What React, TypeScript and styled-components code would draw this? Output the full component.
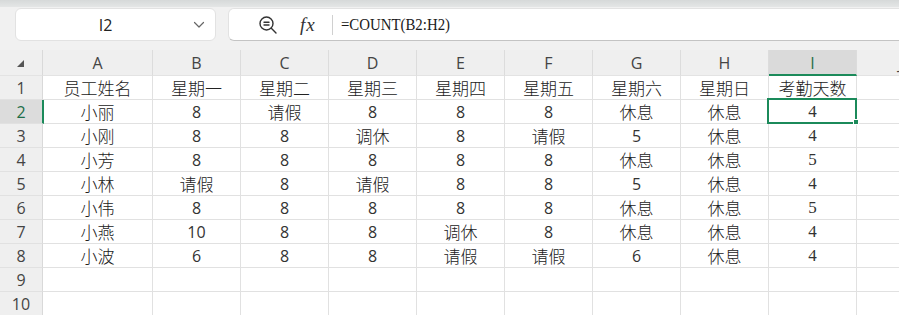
import React from "react";
import styled, { createGlobalStyle, css } from "styled-components";

const GlobalStyle = createGlobalStyle`
  html, body {
    margin: 0;
    padding: 0;
    background: #ffffff;
    overflow: hidden;
  }
  body {
    font-family: "Liberation Sans", "Noto Sans CJK SC", sans-serif;
  }
`;

const GREEN = "#1b8a5a";
const LINE = "#e1e1e1";
const UI_FONT = `"Open Sans", Roboto, "Liberation Sans", sans-serif`;

const Page = styled.div`
  width: 899px;
  height: 315px;
  overflow: hidden;
  background: #ffffff;
`;

const TopStrip = styled.div`
  height: 7px;
  background: linear-gradient(#d6d9d9, #e4e6e6);
`;

const Toolbar = styled.div`
  height: 43px;
  box-sizing: border-box;
  padding: 1px 0 0 15px;
  background: #f1f1f1;
  display: flex;
  gap: 12px;
`;

const NameBox = styled.div`
  width: 201px;
  height: 33px;
  box-sizing: border-box;
  background: #ffffff;
  border: 1px solid #e2e2e2;
  border-radius: 6px;
  display: flex;
  align-items: center;
  padding: 0 10px 0 0;
`;

const CellRef = styled.div`
  flex: 1;
  text-align: center;
  font-family: ${UI_FONT};
  font-size: 16px;
  color: #222;
  padding-left: 2px;
`;

const FormulaBox = styled.div`
  flex: 1;
  margin-right: -12px;
  height: 33px;
  box-sizing: border-box;
  background: #ffffff;
  border: 1px solid #e2e2e2;
  border-bottom-color: #c4c4c4;
  border-radius: 6px 0 0 6px;
  display: flex;
  align-items: center;
  padding-left: 29px;
`;

const FxLabel = styled.span`
  font-family: "Liberation Serif", serif;
  font-style: italic;
  font-size: 19px;
  color: #333;
  margin-left: 22px;
  letter-spacing: 1px;
`;

const Divider = styled.div`
  width: 1px;
  height: 20px;
  background: #d0d0d0;
  margin: 0 8px 0 16px;
`;

const FormulaText = styled.span`
  display: inline-block;
  font-family: "Liberation Serif", serif;
  font-size: 16.5px;
  color: #1a1a1a;
  transform: scaleX(0.9);
  transform-origin: left center;
`;

const Sheet = styled.div`
  display: grid;
  grid-template-columns: 43px 110px repeat(9, 88px);
  grid-auto-rows: 24px;
  grid-template-rows: 26px;
  width: max-content;
`;

const baseCell = css`
  box-sizing: border-box;
  border-right: 1px solid ${LINE};
  border-bottom: 1px solid ${LINE};
  display: flex;
  align-items: center;
  justify-content: center;
  white-space: nowrap;
`;

const Corner = styled.div`
  ${baseCell};
  background: #efefef;
  border-right-color: #d9d9d9;
  border-bottom-color: #e3e3e3;
  position: relative;

  &::after {
    content: "";
    position: absolute;
    left: 17px;
    top: 10px;
    width: 0;
    height: 0;
    border-left: 7px solid transparent;
    border-bottom: 7px solid #555;
  }
`;

const ColHead = styled.div<{ $active?: boolean }>`
  ${baseCell};
  background: ${(p) => (p.$active ? "#dadada" : "#efefef")};
  border-right-color: #dcdcdc;
  border-bottom: ${(p) => (p.$active ? `2px solid ${GREEN}` : "1px solid #e3e3e3")};
  font-family: ${UI_FONT};
  font-size: 16px;
  color: ${(p) => (p.$active ? "#1d6e48" : "#444")};
  padding-top: ${(p) => (p.$active ? "1px" : "0")};
`;

const RowHead = styled.div<{ $active?: boolean }>`
  ${baseCell};
  background: ${(p) => (p.$active ? "#dcdcdc" : "#efefef")};
  border-right: ${(p) => (p.$active ? `2px solid ${GREEN}` : "1px solid #d9d9d9")};
  margin-right: ${(p) => (p.$active ? "-1px" : "0")};
  font-family: ${UI_FONT};
  font-size: 16px;
  color: ${(p) => (p.$active ? "#1d6e48" : "#444")};
  position: relative;
  z-index: 1;
`;

const Cell = styled.div<{ $selected?: boolean }>`
  ${baseCell};
  position: relative;
  color: #1a1a1a;

  ${(p) =>
    p.$selected &&
    css`
      &::after {
        content: "";
        position: absolute;
        left: -2px;
        top: -2px;
        right: -1px;
        bottom: -1px;
        border: 2px solid ${GREEN};
      }
      &::before {
        content: "";
        position: absolute;
        right: -3px;
        bottom: -2px;
        width: 6px;
        height: 6px;
        background: ${GREEN};
        border: 1px solid #fff;
        box-sizing: border-box;
        z-index: 2;
      }
    `}
`;

const Han = styled.span`
  font-family: "Noto Sans CJK SC", sans-serif;
  font-size: 17px;
  font-weight: 300;
  color: #222;
`;

const Num = styled.span<{ $serif?: boolean }>`
  font-family: ${(p) => (p.$serif ? `"Liberation Serif", serif` : UI_FONT)};
  font-size: ${(p) => (p.$serif ? "17px" : "16px")};
  font-weight: 400;
  color: #333;
`;

const ZoomIcon = () => (
  <svg width="20" height="20" viewBox="0 0 20 20" fill="none" stroke="#333" strokeWidth="1.4" strokeLinecap="round">
    <circle cx="8.5" cy="8.5" r="6.5" />
    <line x1="13.3" y1="13.3" x2="18" y2="18" />
    <line x1="6" y1="7.2" x2="11" y2="7.2" />
    <line x1="6" y1="10" x2="11" y2="10" />
  </svg>
);

const Chevron = () => (
  <svg width="12" height="8" viewBox="0 0 12 8" fill="none" stroke="#666" strokeWidth="1.2" strokeLinecap="round" strokeLinejoin="round">
    <polyline points="1.5,1.5 6,6 10.5,1.5" />
  </svg>
);

const columns = ["A", "B", "C", "D", "E", "F", "G", "H", "I", "J"];

const data: string[][] = [
  ["员工姓名", "星期一", "星期二", "星期三", "星期四", "星期五", "星期六", "星期日", "考勤天数"],
  ["小丽", "8", "请假", "8", "8", "8", "休息", "休息", "4"],
  ["小刚", "8", "8", "调休", "8", "请假", "5", "休息", "4"],
  ["小芳", "8", "8", "8", "8", "8", "休息", "休息", "5"],
  ["小林", "请假", "8", "请假", "8", "8", "5", "休息", "4"],
  ["小伟", "8", "8", "8", "8", "8", "休息", "休息", "5"],
  ["小燕", "10", "8", "8", "调休", "8", "休息", "休息", "4"],
  ["小波", "6", "8", "8", "请假", "请假", "6", "休息", "4"],
  [],
  [],
];

const renderValue = (value: string | undefined, col: number) => {
  if (!value) return null;
  if (/^\d+$/.test(value)) return <Num $serif={col === 8}>{value}</Num>;
  return <Han>{value}</Han>;
};

const App: React.FC = () => {
  return (
    <Page>
      <GlobalStyle />
      <TopStrip />
      <Toolbar>
        <NameBox>
          <CellRef>I2</CellRef>
          <Chevron />
        </NameBox>
        <FormulaBox>
          <ZoomIcon />
          <FxLabel>fx</FxLabel>
          <Divider />
          <FormulaText>=COUNT(B2:H2)</FormulaText>
        </FormulaBox>
      </Toolbar>
      <Sheet>
        <Corner />
        {columns.map((c) => (
          <ColHead key={c} $active={c === "I"}>
            {c}
          </ColHead>
        ))}
        {data.map((row, r) => (
          <React.Fragment key={r}>
            <RowHead $active={r === 1}>{r + 1}</RowHead>
            {columns.map((c, ci) => (
              <Cell key={c} $selected={r === 1 && c === "I"}>
                {renderValue(row[ci], ci)}
              </Cell>
            ))}
          </React.Fragment>
        ))}
      </Sheet>
    </Page>
  );
};

export default App;
